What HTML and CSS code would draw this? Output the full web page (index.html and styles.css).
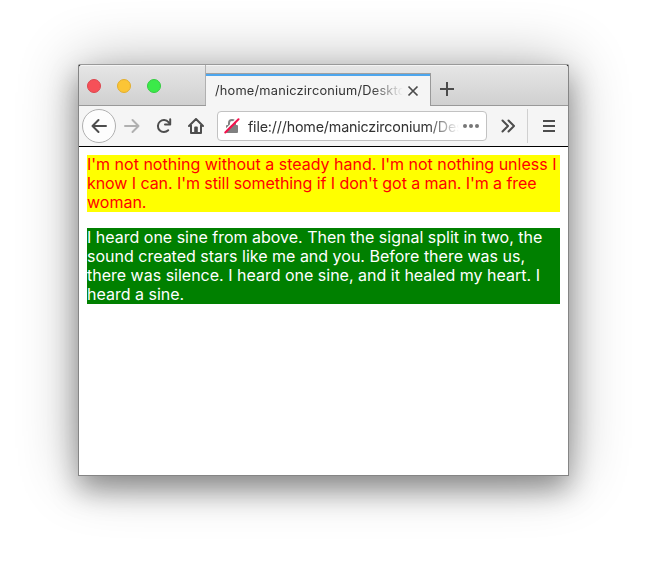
FILE: index.html
```html
<!DOCTYPE html>
<html lang="en">
<head>
<meta charset="utf-8">
<title>Browser window</title>
<link rel="stylesheet" href="styles.css">
</head>
<body>
<div class="window">
  <div class="titlebar">
    <div class="controls">
      <span class="dot close"></span><span class="dot minimize"></span><span class="dot maximize"></span>
    </div>
    <div class="tab">
      <span class="tab-title">/home/maniczirconium/Deskto</span>
      <svg class="tab-close" width="12" height="12" viewBox="0 0 12 12"><path d="M1.500 1.500l9 9M10.500 1.500l-9 9"/></svg>
    </div>
    <svg class="new-tab" width="16" height="16" viewBox="0 0 16 16"><path d="M8 1v14M1 8h14"/></svg>
  </div>
  <div class="toolbar">
    <div class="back"><svg class="icon" width="16" height="16" viewBox="0 0 16 16"><path d="M15 8H1.500M7.500 2l-6 6 6 6"/></svg></div>
    <svg class="icon forward" width="16" height="16" viewBox="0 0 16 16"><path d="M1 8h13.500M8.500 2l6 6-6 6"/></svg>
    <svg class="icon reload" width="16" height="16" viewBox="0 0 16 16"><path d="M12.200 12.300A6 6 0 1 1 12.500 4.200L14 6"/><path d="M14.200 1.200v5.300H9" /></svg>
    <svg class="icon home" width="16" height="16" viewBox="0 0 16 16"><path d="M1 8l7-7 7 7M3 7v8h10V7"/><path class="fill" d="M6.200 15V9.500q0-1 1-1h1.600q1 0 1 1V15z"/></svg>
    <div class="urlbar">
      <svg class="lock" width="16" height="16" viewBox="0 0 16 16"><path class="shackle" d="M5 7V5a3 3 0 0 1 6 0v2"/><rect class="lock-body" x="2" y="7" width="12" height="8" rx="1"/><path class="gap" d="M-.3 13.700L13.200 .2"/><path class="slash" d="M1.300 14.500L14.500 1.300"/></svg>
      <span class="url">file:///home/maniczirconium/Des</span>
      <svg class="dots" width="18" height="6" viewBox="0 0 18 6"><circle cx="3" cy="3" r="2"/><circle cx="9" cy="3" r="2"/><circle cx="15" cy="3" r="2"/></svg>
    </div>
    <svg class="icon more" width="16" height="16" viewBox="0 0 16 16"><path d="M2.500 2.500L8 8l-5.500 5.500M8.500 2.500L14 8l-5.500 5.500"/></svg>
    <span class="separator"></span>
    <svg class="icon menu" width="12" height="12" viewBox="0 0 12 12"><path d="M0 1h12M0 6h12M0 11h12"/></svg>
  </div>
  <main class="page">
    <p class="verse yellow">I'm not nothing without a steady hand. I'm not nothing unless I <span class="tight">know I can. I'm still something if I don't got a man. I'm a free</span> woman.</p>
    <p class="verse green">I heard one sine from above. Then the signal split in two, the sound created stars like me and you. Before there was us, there was silence. I heard one sine, and it healed my heart. I heard a sine.</p>
  </main>
</div>
</body>
</html>
```
FILE: styles.css
```css
* { box-sizing: border-box; }
body {
  margin: 0;
  height: 568px;
  padding: 64px 0 0 78px;
  overflow: hidden;
  background: #fff;
  font-family: Inter, sans-serif;
}
svg { display: block; flex: none; fill: none; }
.window {
  width: 491px;
  height: 412px;
  display: flex;
  flex-direction: column;
  border: 1px solid #858585;
  border-top-color: #999;
  border-radius: 2px 2px 0 0;
  box-shadow: 0 14px 28px rgba(0,0,0,.35), 0 0 60px rgba(0,0,0,.3);
  background: #000;
}
.titlebar {
  height: 41px;
  flex: none;
  display: flex;
  border-bottom: 1px solid #999;
  border-radius: 3px 3px 0 0;
  background: linear-gradient(#e6e6e6, #d0d0d0);
  box-shadow: inset 0 1px #f4f4f4;
}
.controls {
  width: 127px;
  display: flex;
  gap: 16px;
  padding: 14px 0 0 8px;
  border-right: 1px solid #b0b0b0;
}
.dot { width: 14px; height: 14px; border: 1px solid; border-radius: 50%; }
.close { background: #f65058; border-color: #dc464e; }
.minimize { background: #fbc536; border-color: #e3ae2d; }
.maximize { background: #3bea49; border-color: #34cc41; }
.tab {
  width: 225px;
  height: 33px;
  margin-top: 8px;
  display: flex;
  align-items: center;
  padding: 2px 11px 0 9px;
  border-top: 1px solid #a0a0a0;
  border-right: 1px solid #999;
  background: #f5f5f5;
  box-shadow: inset 0 2px #4da6ee;
}
.tab-title, .url {
  white-space: nowrap;
  color: #333;
  -webkit-mask-image: linear-gradient(to left, transparent, #000 32px);
  mask-image: linear-gradient(to left, transparent, #000 32px);
}
.tab-title { width: 188px; margin: -2px 4px 0 0; font-size: 12.800px; letter-spacing: .2px; }
.tab-close, .new-tab { stroke: #4b4b4b; stroke-width: 2; }
.tab-close { stroke-width: 1.700; }
.new-tab { margin: 16px 0 0 8px; }
.toolbar {
  height: 41px;
  flex: none;
  display: flex;
  align-items: center;
  padding-left: 3px;
  border-bottom: 1px solid #000;
  background: #f5f5f5;
}
.icon { stroke: #4d4d4d; stroke-width: 2; stroke-linejoin: round; stroke-linecap: round; }
.back {
  width: 34px;
  height: 34px;
  display: flex;
  align-items: center;
  justify-content: center;
  border: 1px solid #b0b0b0;
  border-radius: 50%;
  background: #fdfdfd;
}
.forward { margin-left: 8px; stroke: #b0b0b0; }
.reload, .home { margin-left: 16px; }
.fill { fill: #4d4d4d; stroke: none; }
.urlbar {
  width: 270px;
  height: 30px;
  margin-left: 13px;
  display: flex;
  align-items: center;
  padding-left: 6px;
  border: 1px solid #c2c2c2;
  border-radius: 4px;
  background: #fff;
}
.shackle { stroke: #808080; stroke-width: 2; }
.lock-body { fill: #808080; }
.gap { stroke: #fff; stroke-width: 1.500; }
.slash { stroke: #f5104c; stroke-width: 2; stroke-linecap: round; }
.url { width: 211px; margin-left: 8px; font-size: 14.300px; letter-spacing: -.18px; }
.dots { margin-left: 3px; fill: #777; }
.more { margin-left: 13px; }
.separator { width: 1px; height: 34px; margin-left: 11px; background: #d0d0d0; }
.menu { margin-left: 15px; stroke-linecap: butt; }
.page { flex: 1; padding: 8px; background: #fff; }
.verse { margin: 0 0 16px; font-size: 16px; line-height: 19px; }
.tight { letter-spacing: -.07px; }
.yellow { background: #ff0; color: #f00; }
.green { background: #008000; color: #fff; }
```
